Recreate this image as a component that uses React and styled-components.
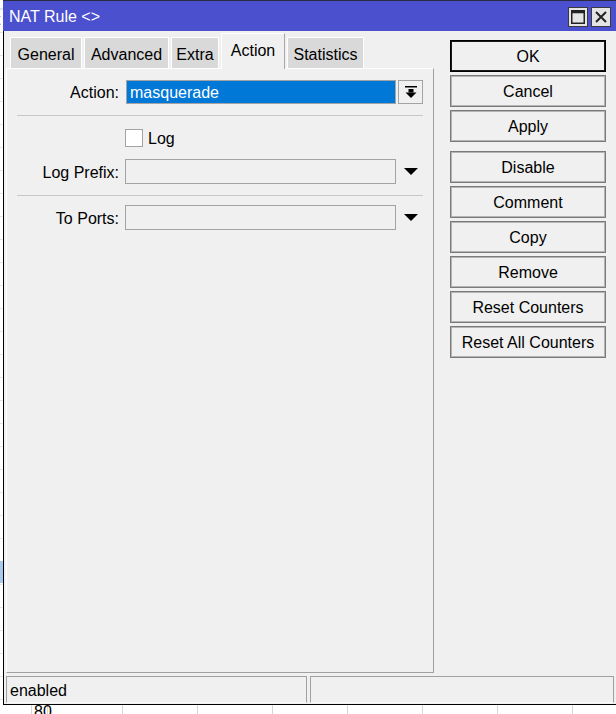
import React from 'react';
import styled, { createGlobalStyle } from 'styled-components';

const Global = createGlobalStyle`
  html, body { margin: 0; padding: 0; overflow: hidden; background: #fff; }
  body { font-family: "Liberation Sans", Arial, sans-serif; font-size: 16px; color: #000; }
  * { box-sizing: border-box; }
`;

const Desktop = styled.div`
  position: relative;
  width: 616px;
  height: 714px;
  overflow: hidden;
  background-color: #fff;
  background-image:
    repeating-linear-gradient(to bottom, #e4e4e4 0 1px, transparent 1px 23px),
    repeating-linear-gradient(to right, #d6d6d6 0 1px, transparent 1px 75px);
  background-position: 0 9px, 47px 0;
`;

const BackRowHighlight = styled.div`
  position: absolute;
  left: 0;
  top: 561px;
  width: 10px;
  height: 22px;
  background: #a9c9ee;
`;

const BackText = styled.span`
  position: absolute;
  left: ${p => p.$x}px;
  top: ${p => p.$y}px;
  font-size: 16px;
  line-height: 16px;
  color: ${p => p.$color || '#000'};
`;

const Window = styled.div`
  position: absolute;
  left: 3px;
  top: 0;
  width: 614px;
  height: 705px;
  display: flex;
  flex-direction: column;
  border-top: 1px solid #2a2a40;
`;

const TitleBar = styled.div`
  height: 30px;
  flex: none;
  background: #4b50ce;
  color: #fff;
  display: flex;
  align-items: center;
  padding: 0 6px 0 6px;
  font-size: 16px;
`;

const TitleText = styled.span`
  margin-top: 1px;
`;

const TitleButtons = styled.div`
  margin-left: auto;
  display: flex;
  gap: 3px;
  margin-top: 2px;
`;

const TitleButton = styled.div`
  width: 20px;
  height: 20px;
  background: #e4e4e4;
  border: 1px solid #3a3a3a;
  display: flex;
  align-items: center;
  justify-content: center;
`;

const WindowBody = styled.div`
  flex: 1;
  background: #f0f0f0;
  border-left: 1px solid #000;
  border-bottom: 1px solid #000;
  display: flex;
  flex-direction: column;
`;

const Main = styled.div`
  flex: 1;
  display: flex;
  min-height: 0;
`;

const LeftPane = styled.div`
  width: 428px;
  margin-left: 2px;
  padding-top: 2px;
  display: flex;
  flex-direction: column;
`;

const TabBar = styled.div`
  height: 35px;
  flex: none;
  display: flex;
  align-items: flex-end;
  padding-left: 4px;
  gap: 2px;
  position: relative;
  z-index: 1;
`;

const Tab = styled.div`
  width: ${p => p.$w}px;
  height: ${p => (p.$active ? 36 : 31)}px;
  margin-bottom: ${p => (p.$active ? -1 : 0)}px;
  padding-bottom: ${p => (p.$active ? 4 : 0)}px;
  padding-top: 3px;
  background: ${p => (p.$active ? '#f0f0f0' : '#d9d9d9')};
  border-top: 1px solid #fff;
  border-left: 1px solid #fff;
  border-right: 1px solid ${p => (p.$active ? '#a8a8a8' : '#fff')};
  display: flex;
  align-items: center;
  justify-content: center;
  font-size: 16px;
  white-space: nowrap;
`;

const Panel = styled.div`
  flex: 1;
  border-top: 1px solid #fff;
  border-left: 1px solid #fff;
  border-right: 1px solid #a0a0a0;
  border-bottom: 1px solid #a0a0a0;
  padding: 11px 10px 0 10px;
  display: flex;
  flex-direction: column;
`;

const FormRow = styled.div`
  display: flex;
  align-items: center;
  height: ${p => p.$h || 25}px;
  margin-top: ${p => p.$top || 0}px;
`;

const Label = styled.div`
  width: 102px;
  margin-right: 6px;
  padding-top: 2px;
  flex: none;
  text-align: right;
  font-size: 16px;
  white-space: nowrap;
`;

const Field = styled.div`
  width: ${p => (p.$selected ? 270 : 271)}px;
  flex: none;
  height: ${p => p.$h || 25}px;
  border: 1px solid #a3a3a3;
  background: ${p => (p.$selected ? '#0078d7' : '#f0f0f0')};
  color: ${p => (p.$selected ? '#fff' : '#000')};
  padding: 1px 0 0 3px;
  display: flex;
  align-items: center;
  font-size: 16px;
  margin-left: ${p => (p.$selected ? 1 : 0)}px;
`;

const DropButton = styled.div`
  width: 25px;
  margin-left: 2px;
  height: 24px;
  flex: none;
  border: 1px solid #a3a3a3;
  background: #f0f0f0;
  display: flex;
  align-items: center;
  justify-content: center;
`;

const DropArrow = styled.div`
  width: 25px;
  margin-left: 2px;
  flex: none;
  display: flex;
  align-items: center;
  justify-content: center;
  height: 100%;
`;

const Separator = styled.div`
  height: 1px;
  background: #c8c8c8;
  margin-top: ${p => p.$top}px;
  margin-bottom: ${p => p.$bottom}px;
`;

const CheckCell = styled.div`
  margin-left: 108px;
  display: flex;
  align-items: center;
  gap: 5px;
`;

const CheckBox = styled.div`
  width: 18px;
  height: 18px;
  background: #fff;
  border: 1px solid #a3a3a3;
`;

const CheckText = styled.span`
  padding-top: 2px;
`;

const RightPane = styled.div`
  width: 156px;
  margin-left: 16px;
  padding-top: 9px;
  display: flex;
  flex-direction: column;
`;

const Button = styled.div`
  height: 32px;
  margin-top: ${p => p.$top ?? 3}px;
  padding-top: 2px;
  background: #f0f0f0;
  border: 1px solid ${p => (p.$primary ? '#000' : '#7a7a7a')};
  box-shadow: inset 0 0 0 1px ${p => (p.$primary ? '#1a1a1a' : '#b4b4b4')};
  display: flex;
  align-items: center;
  justify-content: center;
  font-size: 16px;
  white-space: nowrap;
`;

const StatusBar = styled.div`
  height: 27px;
  flex: none;
  margin: 3px 0 1px 0;
  padding: 0 3px 0 2px;
  display: flex;
  gap: 3px;
`;

const StatusCell = styled.div`
  width: ${p => (p.$w ? `${p.$w}px` : 'auto')};
  flex: ${p => (p.$w ? 'none' : 1)};
  border: 1px solid #a0a0a0;
  border-bottom-color: #fafafa;
  padding: 2px 0 0 3px;
  display: flex;
  align-items: center;
  font-size: 16px;
`;

const TriangleDown = () => (
  <svg width="14" height="7" viewBox="0 0 14 7">
    <polygon points="0,0 14,0 7,7" fill="#000" />
  </svg>
);

const ArrowToBottom = () => (
  <svg width="12" height="13" viewBox="0 0 12 13">
    <rect x="0" y="0" width="12" height="1.5" fill="#000" />
    <rect x="3.5" y="3" width="5" height="3.5" fill="#000" />
    <polygon points="0.5,6.5 11.5,6.5 6,12" fill="#000" />
  </svg>
);

const MaxIcon = () => (
  <svg width="14" height="14" viewBox="0 0 14 14">
    <rect x="0.75" y="0.75" width="12.5" height="12.5" fill="none" stroke="#222" strokeWidth="1.5" />
    <rect x="0.75" y="0.75" width="12.5" height="2.5" fill="#222" />
  </svg>
);

const CloseIcon = () => (
  <svg width="12" height="12" viewBox="0 0 12 12">
    <path d="M1 1 L11 11 M11 1 L1 11" stroke="#222" strokeWidth="2" />
  </svg>
);

const tabs = [
  { name: 'General', w: 72 },
  { name: 'Advanced', w: 85 },
  { name: 'Extra', w: 48 },
  { name: 'Action', w: 64 },
  { name: 'Statistics', w: 77 },
];
const group1 = ['OK', 'Cancel', 'Apply'];
const group2 = ['Disable', 'Comment', 'Copy', 'Remove', 'Reset Counters', 'Reset All Counters'];

export default function App() {
  return (
    <>
      <Global />
      <Desktop>
        <BackRowHighlight />
        <BackText $x={-4} $y={12} $color="#5a3a10">t</BackText>
        <BackText $x={34} $y={704}>80</BackText>
        <Window>
          <TitleBar>
            <TitleText>NAT Rule &lt;&gt;</TitleText>
            <TitleButtons>
              <TitleButton><MaxIcon /></TitleButton>
              <TitleButton><CloseIcon /></TitleButton>
            </TitleButtons>
          </TitleBar>
          <WindowBody>
            <Main>
              <LeftPane>
                <TabBar>
                  {tabs.map(t => (
                    <Tab key={t.name} $w={t.w} $active={t.name === 'Action'}>{t.name}</Tab>
                  ))}
                </TabBar>
                <Panel>
                  <FormRow $h={24}>
                    <Label>Action:</Label>
                    <Field $selected $h={24}>masquerade</Field>
                    <DropButton><ArrowToBottom /></DropButton>
                  </FormRow>
                  <Separator $top={11} $bottom={13} />
                  <FormRow $h={18}>
                    <CheckCell>
                      <CheckBox />
                      <CheckText>Log</CheckText>
                    </CheckCell>
                  </FormRow>
                  <FormRow $top={12}>
                    <Label>Log Prefix:</Label>
                    <Field />
                    <DropArrow><TriangleDown /></DropArrow>
                  </FormRow>
                  <Separator $top={11} $bottom={9} />
                  <FormRow>
                    <Label>To Ports:</Label>
                    <Field />
                    <DropArrow><TriangleDown /></DropArrow>
                  </FormRow>
                </Panel>
              </LeftPane>
              <RightPane>
                {group1.map((b, i) => (
                  <Button key={b} $primary={b === 'OK'} $top={i === 0 ? 0 : 3}>{b}</Button>
                ))}
                {group2.map((b, i) => (
                  <Button key={b} $top={i === 0 ? 9 : 3}>{b}</Button>
                ))}
              </RightPane>
            </Main>
            <StatusBar>
              <StatusCell $w={301}>enabled</StatusCell>
              <StatusCell />
            </StatusBar>
          </WindowBody>
        </Window>
      </Desktop>
    </>
  );
}
